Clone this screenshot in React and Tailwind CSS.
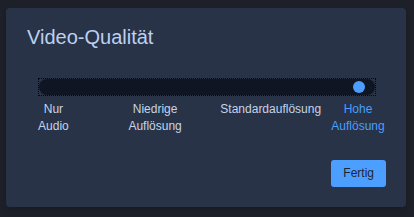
export default function App() {
  const font = { fontFamily: '"Liberation Sans", Arial, sans-serif' };
  return (
    <div className="w-[414px] h-[217px] bg-[#1e2029] pt-[8px] pl-[6px]" style={font}>
      <div className="w-[400px] h-[199px] bg-[#283347] rounded-[4px] shadow-md px-[20px] pt-[17px] pb-[20px] flex flex-col">
        <div className="text-[20px] leading-[24px] text-[#bdd0f0] pl-px">Video-Qualität</div>
        <div className="mt-[30px] ml-[13px] mr-[11px] h-[16px] outline-1 outline-dotted outline-[#05070c]">
          <div className="h-full rounded-full bg-[#0f1522] flex items-center justify-end pr-[10px]">
            <div className="w-[12px] h-[12px] rounded-full bg-[#4d9dff]" />
          </div>
        </div>
        <div className="mt-[6px] flex text-[12px] leading-[17px] text-[#c6d3e8]">
          <div className="w-[55px] text-center">Nur<br />Audio</div>
          <div className="ml-[34.5px] w-[80px] text-center">Niedrige<br />Auflösung</div>
          <div className="ml-[21px] w-[110px] text-center">Standardauflösung</div>
          <div className="ml-[4.5px] w-[56px] text-center text-[#4a9eff] shrink-0">Hohe<br />Auflösung</div>
        </div>
        <div className="mt-[25px] flex justify-end">
          <button className="h-[27px] px-[12px] rounded-[3px] bg-[#4d9fff] text-[#1b2536] text-[12px] leading-[27px]">Fertig</button>
        </div>
      </div>
    </div>
  );
}
